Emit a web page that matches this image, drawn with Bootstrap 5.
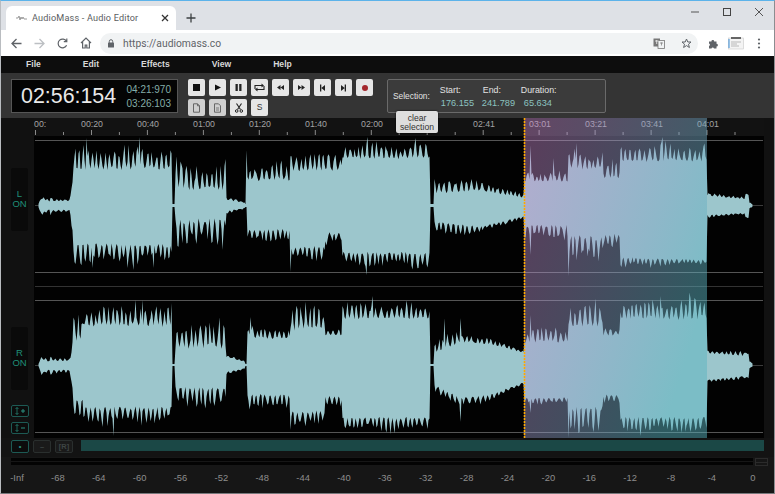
<!DOCTYPE html>
<html lang="en">
<head>
<meta charset="utf-8">
<title>AudioMass - Audio Editor</title>
<link href="https://cdn.jsdelivr.net/npm/bootstrap@5.3.0/dist/css/bootstrap.min.css" rel="stylesheet">
<style>
html,body{height:494px;overflow:hidden;background:#161616}
body{font-family:"Liberation Sans",Arial,sans-serif}
.window{width:775px;height:494px;border-top:1px solid #5cb3ea;border-left:1px solid #b9bcc0;border-right:1px solid #8b8d90;border-bottom:1px solid #77797c;overflow:hidden}
.tabstrip{height:29px;background:#dee1e6;padding-left:5px}
.tab{width:170px;height:24px;margin-top:5px;background:#fff;border-radius:6px 6px 0 0;padding:0 7px 0 10px;font:9.1px Roboto,sans-serif;letter-spacing:.02em;color:#5a5d61;gap:5px}
.tab .ttl{flex:1;white-space:nowrap}
.newtab{margin-left:6px;margin-top:5px;width:18px}
.winctl{margin-left:auto;gap:24px;padding-right:11px;height:22px}
.addr{height:26px;background:#fff;padding:0 7px 0 10px}
.navicons{gap:12px;width:89px}
.omni{width:598px;height:21px;background:#f1f3f4;border-radius:11px;padding:0 6px 0 7px;font:10.3px Roboto,sans-serif;color:#5f6368;gap:8px}
.exts{gap:9px;padding-left:10px}
.menubar{height:17px;background:#0d0d0d;padding-left:25px;gap:42px;font-size:8.6px;font-weight:700;color:#d8d8d8}
.toolbar{height:45px;background:#343434;padding:6px 0 0 10px}
.timebox{width:167px;height:34px;background:#040404;border:1px solid #565656;padding:0 6px 0 9px;color:#e9e9e9;font-size:21.4px}
.timebox .sm{font-size:10px;line-height:14px;color:#84aea8;margin-left:auto;text-align:right;padding-top:1px}
.btns{width:186px;margin-left:10px;gap:3px 4px}
.btn.tb{width:17px;height:17px;padding:0;border:0;border-radius:2px;background:#e6e6e6;color:#333;font-size:8.5px;line-height:17px;display:flex;align-items:center;justify-content:center}
.btn.tb.dim{background:#cfcfcf;opacity:1}
.selbox{width:219px;height:34px;margin-left:13px;background:#3b3b3b;border:1px solid #6a6a6a;border-radius:2px;font-size:8.8px;color:#e2e2e2;padding-left:5px}
.selbox .lbl{font-size:8.4px;margin-right:10px}
.selbox .c{line-height:13px;padding-top:1px}
.selbox .v{color:#8bc3c0;font-size:9.2px}
.c1{width:42px}.c2{width:39px}.c3{width:44px}
.c1 .v{padding-left:1px}.c2 div:first-child{padding-left:1px}.c3 .v{padding-left:3px}
.editor{height:320px;position:relative;background:#111}
.side{width:33px;padding-left:10px;flex:none}
.chan{width:17px;height:63px;background:#0a0a0a;border-radius:2px;color:#1f8f78;font-size:9.5px;line-height:10px;text-align:center;padding-top:21px}
.chan.l{margin-top:50px}.chan.r{margin-top:96px}
.zb{width:18px;height:12px;border:1px solid #1d5a54;border-radius:2px;color:#2a9080;background:#0c0c0c;gap:2px;margin-top:5px}
.chan.r + .zb{margin-top:15px}
svg.wave{display:block;flex:none}
.wv{fill:#9cc6cc;filter:blur(.3px)}
.tooltipx{position:absolute;left:395px;top:-7px;width:42px;height:22px;background:#dedede;border-radius:2px;font-size:8.6px;line-height:8.6px;color:#333;text-align:center;padding-top:3px;box-shadow:0 0 2px #000}
.scrollrow{height:19px;padding:2px 0 0 10px;gap:4px;background:#131313}
.sb{width:18px;height:13px;border:1px solid #2a2f2e;border-radius:2px;background:#1a1a1a;color:#3e4544;font-size:7.5px;line-height:11px;font-weight:700;text-align:center}
.sb.on{border-color:#1d5a54;color:#2a9080;background:#0c0c0c}
.sbar{margin-left:4px;width:683px;height:11px;background:#1b4846}
.meter{height:10px;padding-left:10px;gap:1px;background:#161616}
.meter i{display:block;height:3px;width:742px;background:#030303}
.meter .rows{display:flex;flex-direction:column;gap:1px;padding-top:1px}
.mgrid{width:13px;height:8px;margin-left:1px;margin-top:1px;border:1px solid #2b2b2b;background:linear-gradient(#2b2b2b,#2b2b2b) center/100% 1px no-repeat}
.scale{padding:0 5px 0 0;background:#161616;font-size:9.4px;color:#8d8d8d;height:24px;padding-top:4px}
.scale span{width:32px;text-align:center}
</style>
</head>
<body>
<div class="window d-flex flex-column">
  <div class="tabstrip d-flex">
    <div class="tab d-flex align-items-center">
      <svg width="11" height="8" viewBox="0 0 11 8"><path d="M0 4h2l1-2 1 4 1-3 1 2 1-2 1 2h3" fill="none" stroke="#9a9a9a" stroke-width="1"/></svg>
      <span class="ttl">AudioMass - Audio Editor</span>
      <svg width="8" height="8" viewBox="0 0 8 8"><path d="M1 1l6 6M7 1L1 7" stroke="#333" stroke-width="1.3"/></svg>
    </div>
    <div class="newtab d-flex align-items-center justify-content-center">
      <svg width="10" height="10" viewBox="0 0 10 10"><path d="M5 .5v9M.5 5h9" stroke="#3c4043" stroke-width="1.3"/></svg>
    </div>
    <div class="winctl d-flex align-items-center">
      <svg width="8" height="8" viewBox="0 0 8 8"><path d="M0 4h8" stroke="#555" stroke-width="1"/></svg>
      <svg width="8" height="8" viewBox="0 0 8 8"><rect x=".5" y=".5" width="7" height="7" fill="none" stroke="#444"/></svg>
      <svg width="8" height="8" viewBox="0 0 8 8"><path d="M0 0l8 8M8 0L0 8" stroke="#444" stroke-width=".9"/></svg>
    </div>
  </div>
  <div class="addr d-flex align-items-center">
    <div class="navicons d-flex align-items-center">
      <svg width="11" height="11" viewBox="0 0 11 11"><path d="M10.5 5.5H1.2M5.5 1L1 5.5 5.5 10" fill="none" stroke="#5f6368" stroke-width="1.3"/></svg>
      <svg width="11" height="11" viewBox="0 0 11 11"><path d="M.5 5.5h9.3M5.500 1L10 5.5 5.5 10" fill="none" stroke="#bcbfc3" stroke-width="1.3"/></svg>
      <svg width="11" height="11" viewBox="0 0 11 11"><path d="M9.6 7.2A4.4 4.4 0 1 1 9.4 3.3M9.8 .6v3h-3" fill="none" stroke="#5f6368" stroke-width="1.2"/></svg>
      <svg width="12" height="12" viewBox="0 0 12 12"><path d="M1 6l5-5 5 5M2.6 5v6h2.6V8h1.6v3h2.6V5" fill="none" stroke="#5f6368" stroke-width="1.2"/></svg>
    </div>
    <div class="omni d-flex align-items-center">
      <svg width="8" height="9" viewBox="0 0 8 9"><rect x="1" y="3.6" width="6" height="5" rx=".6" fill="#5f6368"/><path d="M2.3 3.8V2.4a1.7 1.7 0 0 1 3.4 0v1.4" fill="none" stroke="#5f6368"/></svg>
      <span>https://audiomass.co</span>
      <svg class="ms-auto me-2" width="12" height="11" viewBox="0 0 12 11"><rect x=".5" y=".5" width="6.5" height="8" fill="#777"/><rect x="5" y="2.5" width="6.5" height="8" fill="#f1f3f4" stroke="#777" stroke-width=".8"/><path d="M7 5h3M8.5 4.5v3" stroke="#777" stroke-width=".7"/><path d="M2 3h3.5M3.7 2v4" stroke="#fff" stroke-width=".7"/></svg>
      <svg width="11" height="11" viewBox="0 0 11 11"><path d="M5.5 1l1.3 3h3.2L7.5 6.2l.9 3.3-2.9-1.9-2.9 1.9.9-3.3L1 4h3.2z" fill="none" stroke="#5f6368"/></svg>
    </div>
    <div class="exts d-flex align-items-center">
      <svg width="11" height="11" viewBox="0 0 11 11"><path d="M1 3.5h2.4a1.4 1.4 0 0 1 2.8 0h2.3v2.3a1.4 1.4 0 0 1 0 2.8V10.500H6a1.300 1.300 0 0 0-2.500 0H1V8a1.300 1.300 0 0 0 0-2.500z" fill="#5f6368"/></svg>
      <svg width="16" height="14" viewBox="0 0 16 14"><rect x=".5" y="2" width="15" height="11" fill="#f4f4f4" stroke="#c9c9c9" stroke-width=".6"/><rect x="3" y="1" width="10" height="2" fill="#666"/><path d="M1 3v9" stroke="#3a8fd8"/><path d="M3 6h10M3 8h6M3 10h8" stroke="#aaa" stroke-width=".8"/></svg>
      <svg class="ms-1" width="4" height="11" viewBox="0 0 4 11"><circle cx="2" cy="1.500" r="1.100" fill="#5f6368"/><circle cx="2" cy="5.500" r="1.100" fill="#5f6368"/><circle cx="2" cy="9.500" r="1.100" fill="#5f6368"/></svg>
    </div>
  </div>
  <nav class="menubar d-flex align-items-center"><span>File</span><span>Edit</span><span>Effects</span><span>View</span><span>Help</span></nav>
  <div class="toolbar d-flex align-items-start">
    <div class="timebox d-flex align-items-center">
      <span>02:56:154</span>
      <div class="sm">04:21:970<br>03:26:103</div>
    </div>
    <div class="btns d-flex flex-wrap">
      <button class="btn tb"><svg width="9" height="9" viewBox="0 0 9 9"><rect x="1" y="1" width="7" height="7" fill="#111"/></svg></button>
      <button class="btn tb"><svg width="9" height="9" viewBox="0 0 9 9"><path d="M2 1.500l6 3-6 3z" fill="#111"/></svg></button>
      <button class="btn tb"><svg width="9" height="9" viewBox="0 0 9 9"><path d="M1.500 1h2.300v7H1.500zM5.200 1h2.300v7H5.200z" fill="#222"/></svg></button>
      <button class="btn tb"><svg width="11" height="9" viewBox="0 0 11 9"><path d="M1 6V2.500h8M10 3v3.500H2" fill="none" stroke="#222" stroke-width="1.100"/><path d="M7.500.5l2.500 2-2.500 2zM3.500 4.500L1 6.500l2.500 2z" fill="#222"/></svg></button>
      <button class="btn tb"><svg width="9" height="7" viewBox="0 0 9 7"><path d="M4.500 1v5L1 3.500zM8 1v5L4.500 3.500z" fill="#222"/></svg></button>
      <button class="btn tb"><svg width="9" height="7" viewBox="0 0 9 7"><path d="M1 1v5l3.500-2.500zM4.500 1v5L8 3.500z" fill="#222"/></svg></button>
      <button class="btn tb"><svg width="7" height="8" viewBox="0 0 7 8"><path d="M1 .5h1.300v7H1zM6 1v6L2.300 4z" fill="#222"/></svg></button>
      <button class="btn tb"><svg width="7" height="8" viewBox="0 0 7 8"><path d="M6 .5H4.700v7H6zM1 1v6l3.700-3z" fill="#222"/></svg></button>
      <button class="btn tb"><svg width="8" height="8" viewBox="0 0 8 8"><circle cx="4" cy="4" r="3" fill="#a3262c"/></svg></button>
      <button class="btn tb dim"><svg width="9" height="10" viewBox="0 0 9 10"><path d="M1.500.8h4l2 2v6.400h-6zM5.500.8v2h2" fill="none" stroke="#666"/></svg></button>
      <button class="btn tb dim"><svg width="9" height="10" viewBox="0 0 9 10"><path d="M1.500.8h4l2 2v6.400h-6z" fill="none" stroke="#666"/><path d="M3 5h3M3 7h3" stroke="#666" stroke-width=".8"/></svg></button>
      <button class="btn tb"><svg width="10" height="10" viewBox="0 0 10 10"><path d="M2.500 .5L6.500 6.500M7.500.5L3.500 6.500" stroke="#222" stroke-width="1.100"/><circle cx="2.700" cy="8" r="1.300" fill="none" stroke="#222"/><circle cx="7.300" cy="8" r="1.300" fill="none" stroke="#222"/></svg></button>
      <button class="btn tb">S</button>
    </div>
    <div class="selbox d-flex align-items-center">
      <div class="lbl">Selection:</div>
      <div class="c c1"><div>Start:</div><div class="v">176.155</div></div>
      <div class="c c2"><div>End:</div><div class="v">241.789</div></div>
      <div class="c c3"><div>Duration:</div><div class="v">65.634</div></div>
    </div>
  </div>
  <div class="editor d-flex">
    <div class="side">
      <div class="chan l">L<br>ON</div>
      <div class="chan r">R<br>ON</div>
      <div class="zb d-flex align-items-center justify-content-center"><svg width="12" height="8" viewBox="0 0 12 8"><path d="M3 .5v7M1.500 2L3 .5 4.500 2M1.500 6L3 7.500 4.500 6" fill="none" stroke="#2a9080" stroke-width=".7"/><path d="M7 4h4M9 2v4" stroke="#2a9080"/></svg></div>
      <div class="zb d-flex align-items-center justify-content-center"><svg width="12" height="8" viewBox="0 0 12 8"><path d="M3 .5v7M1.500 2L3 .5 4.500 2M1.500 6L3 7.500 4.500 6" fill="none" stroke="#2a9080" stroke-width=".7"/><path d="M7 4h4" stroke="#2a9080"/></svg></div>
    </div>
    <svg class="wave" id="wave" width="730" height="320" viewBox="34 118 730 320" font-family="Liberation Sans, sans-serif" font-size="8.8">
      <defs>
        <linearGradient id="selg" x1="0" y1="0" x2="1" y2=".55">
          <stop offset="0" stop-color="#d28ad2" stop-opacity=".43"/>
          <stop offset="1" stop-color="#5ab4c0" stop-opacity=".5"/>
        </linearGradient>
      </defs>
      <rect x="34" y="118" width="730" height="320" fill="#020202"/>
      <rect x="34" y="118" width="730" height="18" fill="#121212"/>
      <g fill="#a3a3a3">
        <text x="34" y="127">00:</text><text x="81" y="127">00:20</text><text x="137" y="127">00:40</text><text x="193" y="127">01:00</text><text x="249" y="127">01:20</text><text x="305" y="127">01:40</text><text x="361" y="127">02:00</text><text x="473" y="127">02:41</text><text x="529" y="127">03:01</text><text x="585" y="127">03:21</text><text x="641" y="127">03:41</text><text x="697" y="127">04:01</text>
      </g>
      <g id="ticks" fill="#8a8a8a"></g>
      <g fill="#555">
        <rect x="35" y="140" width="728" height="1"/><rect x="35" y="272" width="728" height="1"/>
        <rect x="35" y="286" width="728" height="1" fill="#333"/>
        <rect x="35" y="300" width="728" height="1"/><rect x="35" y="432" width="728" height="1"/>
        <rect x="35" y="205" width="728" height="1" fill="#3c3c3c"/><rect x="35" y="365" width="728" height="1" fill="#3c3c3c"/>
      </g>
      <path id="chL" class="wv"/>
      <path id="chR" class="wv"/>
      <rect x="524" y="118" width="183" height="320" fill="url(#selg)"/>
      <path d="M524.500 118V438" stroke="#ffab00" stroke-width="1.600" stroke-dasharray="2 1"/>
    </svg>
    <div class="tooltipx">clear<br>selection</div>
  </div>
  <div class="scrollrow d-flex">
    <div class="sb on">•</div><div class="sb">–</div><div class="sb">[R]</div>
    <div class="sbar"></div>
  </div>
  <div class="meter d-flex">
    <div class="rows"><i></i><i></i></div><div class="mgrid"></div>
  </div>
  <div class="scale d-flex justify-content-between">
    <span>-Inf</span><span>-68</span><span>-64</span><span>-60</span><span>-56</span><span>-52</span><span>-48</span><span>-44</span><span>-40</span><span>-36</span><span>-32</span><span>-28</span><span>-24</span><span>-20</span><span>-16</span><span>-12</span><span>-8</span><span>-4</span><span>0</span>
  </div>
</div>
<script src="https://cdn.jsdelivr.net/npm/bootstrap@5.3.0/dist/js/bootstrap.bundle.min.js"></script>
<script>
(function(){
  var s='';
  for(var i=0;i<26;i++){var x=35+i*27.98,maj=i%2==0;s+='<rect x="'+x.toFixed(1)+'" y="'+(maj?130:132)+'" width="1" height="'+(maj?5:3)+'"/>';}
  document.getElementById('ticks').innerHTML=s;

  var seed=12345;
  function rnd(){seed=(seed*1664525+1013904223)%4294967296;return seed/4294967296;}
  // segments: x0,x1, topCore,topPeak,botCore,botPeak [, same at x1]
  var L=[[38,41,204,204,207,207,198,195,214,217],[41,50,199,195,213,216,202,200,209,211],[50,54,198,196,213,216,202,200,209,211],[54,70,201,198,210,213],
    [70,73,198,195,214,217,175,155,238,250],[73,172,168,146,245,265],[172,175,204,204,207,207],[175,226,188,160,221,250],[226,245,200,197,211,214,203,202,208,209],
    [245,247,204,204,207,207],[247,290,180,163,230,243],[290,325,170,150,247,262],[325,342,170,150,233,245],[342,430,158,143,253,268],[430,434,204,204,207,207],
    [434,480,193,173,222,240,190,180,227,233],[480,524,190,180,227,233,198,193,216,218],[524,568,181,171,226,240],[568,603,168,150,238,265],[603,620,178,161,235,248],
    [620,707,161,143,258,270,160,143,260,264],[707,745,196,193,215,218,199,196,213,215],[745,749,195,193,217,218],[749,753,203,202,208,209,205,205,206,206]];
  var R=[[38,41,364,364,366,366,358,355,374,377],[41,50,359,355,373,376,362,360,369,371],[50,54,358,356,373,376,362,360,369,371],[54,70,361,358,370,373],
    [70,73,358,355,374,377,340,312,395,420],[73,83,338,310,400,425],[83,172,325,305,408,425],[172,175,364,364,366,366],[175,226,347,318,388,408],[226,245,357,353,372,376,362,361,368,369],
    [245,247,364,364,366,366],[247,290,338,327,395,411],[290,325,328,302,412,428],[325,342,335,328,397,408],[342,430,318,302,418,432],[430,434,364,364,366,366],
    [434,460,352,338,385,392,342,330,398,410],[460,490,342,332,398,410,344,338,395,402],[490,524,344,338,395,402,353,350,382,385],[524,568,342,327,398,404],[568,603,325,302,408,435],[603,620,335,325,395,405],
    [620,707,318,297,418,432],[707,745,353,349,380,383,356,352,376,379],[745,749,354,352,377,379],[749,753,362,361,368,369,364,364,366,366]];
  var spikesL={top:{86:138,139:137,246:150,367:137,415:138,530:145,553:158,576:143,662:137},bot:{92:268,290:272,366:275,530:255,568:276,133:270,153:268}};
  var spikesR={top:{135:300,142:300,171:303,250:317,444:318,460:318,530:315,372:296,660:296},bot:{113:436,530:413,460:422,568:438,390:434,640:436,290:430}};
  function build(segs,sp,id){
    var top=[],bot=[],p1=rnd()*6,p2=rnd()*6,f1=rnd()*6,f2=rnd()*6;
    function edge(phase,x,f){
      var m=.82+.18*Math.sin(x*.13+f);
      return 1.05*Math.pow(.5+.5*Math.sin(phase),1.2)*m*(.6+.4*rnd())+.12*rnd();
    }
    segs.forEach(function(g){
      for(var x=g[0];x<g[1];x++){
        var t=(x-g[0])/Math.max(1,g[1]-g[0]),e=g.length>6?g:g.concat(g.slice(2,6));
        var tc=e[2]+(e[6]-e[2])*t,tp=e[3]+(e[7]-e[3])*t,bc=e[4]+(e[8]-e[4])*t,bp=e[5]+(e[9]-e[5])*t;
        p1+=.7+rnd()*1.3;p2+=.7+rnd()*1.3;
        var a=edge(p1,x,f1),b=edge(p2,x,f2);
        var tr=tc-tp,br=bp-bc;
        var ty=tc+tr*.1-tr*1.15*a,by=bc-br*.1+br*1.15*b;
        if(sp.top[x])ty=sp.top[x];
        if(sp.bot[x])by=sp.bot[x];
        top.push([x+.5,ty]);bot.push([x+.5,by]);
      }
    });
    var d='M'+top.map(function(p){return p[0]+' '+p[1].toFixed(1)}).join('L')+'L'+bot.reverse().map(function(p){return p[0]+' '+p[1].toFixed(1)}).join('L')+'Z';
    document.getElementById(id).setAttribute('d',d);
  }
  build(L,spikesL,'chL');build(R,spikesR,'chR');
})();
</script>
</body>
</html>
